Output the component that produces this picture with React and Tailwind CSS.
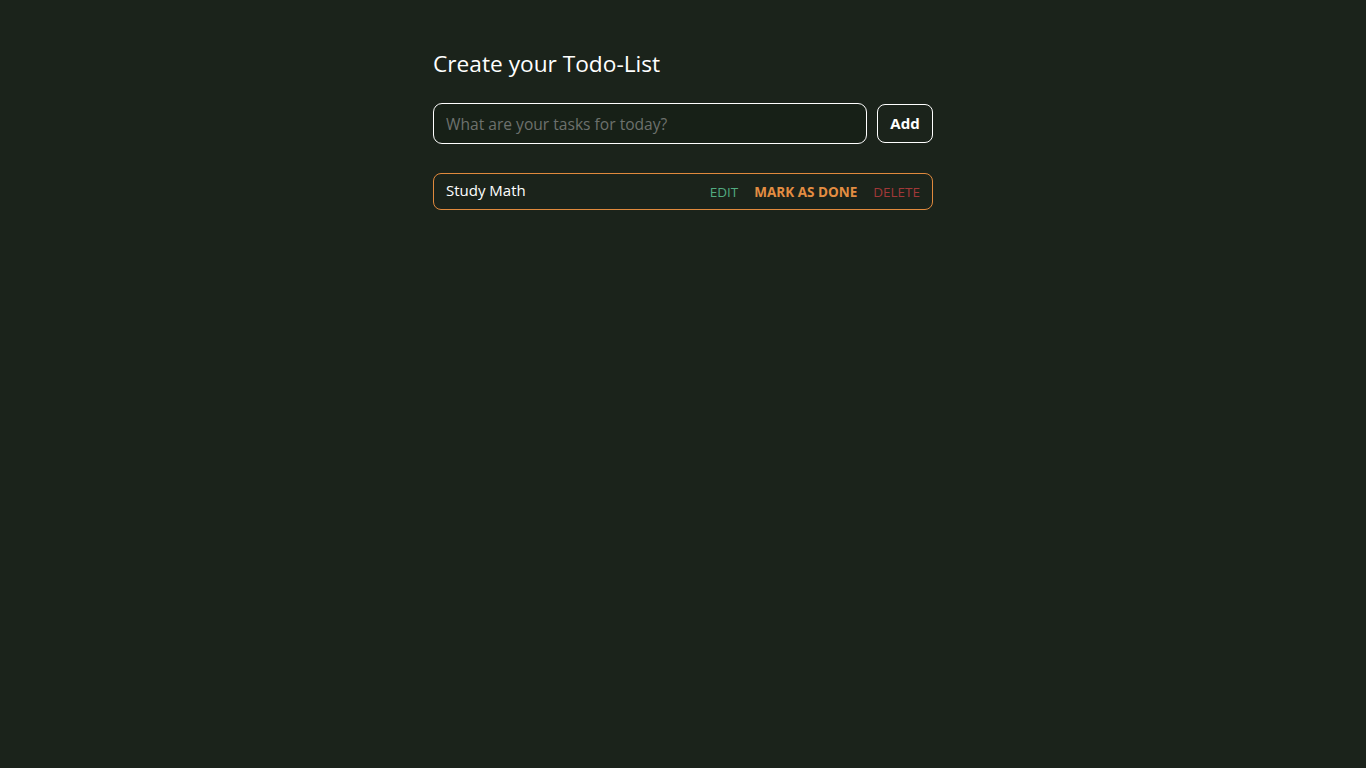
import React, { useState } from 'react';

export default function App() {
  const [todos] = useState([{ id: 1, text: 'Study Math' }]);

  return (
    <div className="min-h-screen w-full bg-[#1b231b] text-white" style={{ fontFamily: '"Open Sans", "Noto Sans", sans-serif' }}>
      <div className="w-[500px] mx-auto pt-[48px]">
        <h1 className="text-[22.7px] leading-[32px] font-normal text-white">Create your Todo-List</h1>

        <div className="mt-[23px] flex items-center gap-[10px]">
          <input
            type="text"
            placeholder="What are your tasks for today?"
            className="flex-1 h-[41px] px-[12px] rounded-[9px] border-[1.5px] border-white bg-[#172017] text-[15.6px] text-white placeholder:text-[#6d716d] outline-none"
          />
          <button className="h-[39px] w-[56px] rounded-[8px] border border-white bg-transparent text-[15px] font-bold text-white">
            Add
          </button>
        </div>

        <div className="mt-[29px] flex flex-col gap-3">
          {todos.map((t) => (
            <div key={t.id} className="flex items-center justify-between h-[37px] px-[12px] rounded-[8px] border border-[#e0893d]">
              <span className="text-[15px] text-white -mt-[2px]">{t.text}</span>
              <div className="flex items-center gap-[16px] pt-[1px]">
                <button className="uppercase text-[13.5px] font-normal text-[#52ab80]">Edit</button>
                <button className="uppercase text-[13.5px] font-bold text-[#e38d42]">Mark as done</button>
                <button className="uppercase text-[13.5px] font-normal text-[#a13838]">Delete</button>
              </div>
            </div>
          ))}
        </div>
      </div>
    </div>
  );
}
